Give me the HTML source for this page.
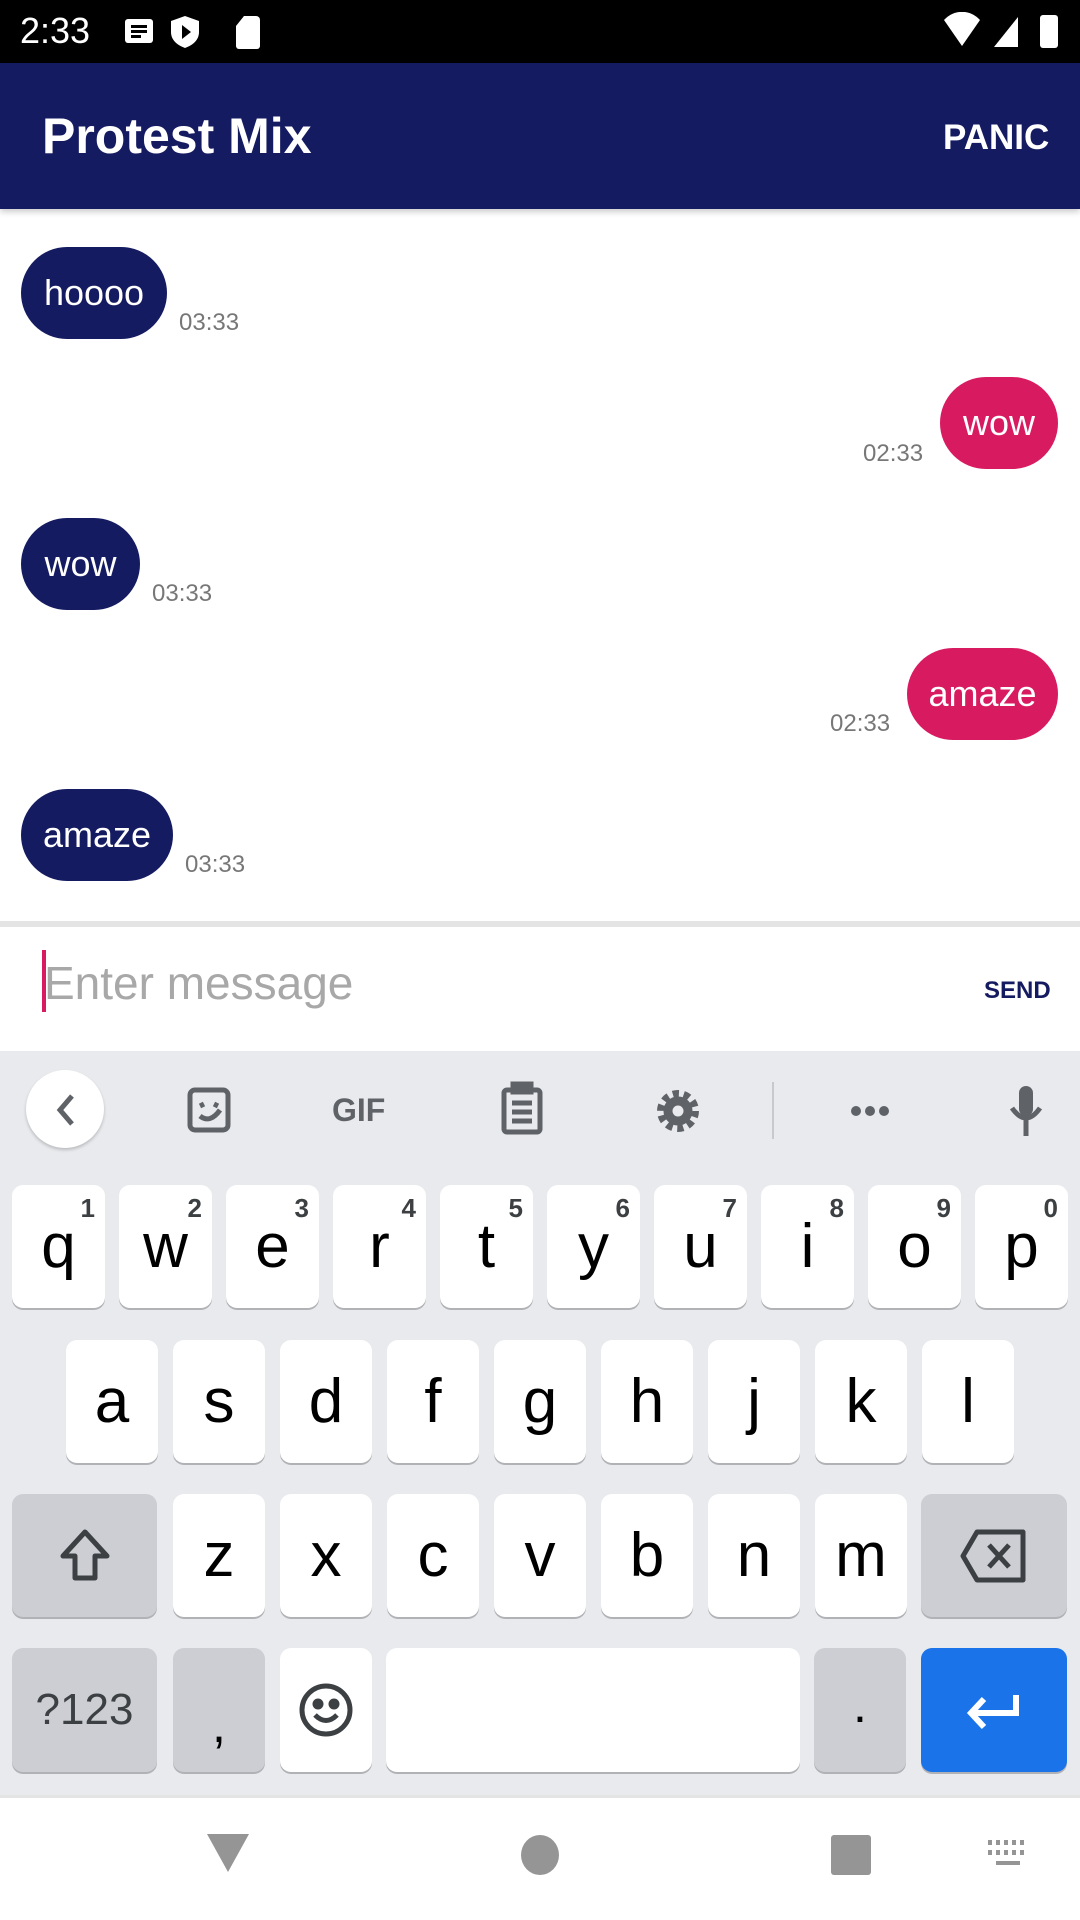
<!DOCTYPE html>
<html><head><meta charset="utf-8"><style>
*{margin:0;padding:0;box-sizing:border-box}
body{width:1080px;height:1920px;position:relative;background:#fff;font-family:"Liberation Sans",sans-serif;overflow:hidden}
.a{position:absolute}
.bl{position:absolute;background:#151b60;color:#fff;border-radius:46px;font-size:36px;display:flex;align-items:center;justify-content:center;height:92px}
.br{position:absolute;background:#d81b60;color:#fff;border-radius:46px;font-size:36px;display:flex;align-items:center;justify-content:center;height:92px}
.t{position:absolute;font-size:24px;color:#777}
.k{position:absolute;background:#fff;border-radius:11px;box-shadow:0 2px 0 #b0b2b6;display:flex;align-items:center;justify-content:center;font-size:62px;color:#000}
.g{background:#ccced4}
.n{position:absolute;top:8px;right:10px;font-size:26px;color:#3c4043;font-weight:bold}
</style></head><body>
<div class="a" style="left:0;top:0;width:1080px;height:63px;background:#000"></div>
<div class="a" style="left:20px;top:10px;color:#fff;font-size:36px">2:33</div>
<svg class="a" style="left:120px;top:14px" width="160" height="36"><rect x="5" y="5" width="28" height="24" rx="3" fill="#fff"/><rect x="11" y="11" width="16" height="3" fill="#000"/><rect x="11" y="16" width="16" height="3" fill="#000"/><rect x="11" y="21" width="10" height="3" fill="#000"/><path d="M65 2l14 5v11c0 8-6 13-14 16c-8-3-14-8-14-16V7z" fill="#fff"/><path d="M62 11l9 7l-9 7z" fill="#000"/><path d="M124 2h12a4 4 0 0 1 4 4v26a3 3 0 0 1-3 3h-18a3 3 0 0 1-3-3V12z" fill="#fff"/></svg>
<svg class="a" style="left:940px;top:12px" width="130" height="40"><path d="M4 8a24 24 0 0 1 36 0l-18 26z" fill="#fff"/><path d="M78 5v30h-24z" fill="#fff"/><rect x="100" y="3" width="18" height="33" rx="3" fill="#fff"/></svg>
<div class="a" style="left:0;top:63px;width:1080px;height:146px;background:#151b60;box-shadow:0 3px 6px rgba(0,0,0,.2)"></div>
<div class="a" style="left:42px;top:107px;color:#fff;font-size:50px;font-weight:bold">Protest Mix</div>
<div class="a" style="left:943px;top:118px;color:#fff;font-size:35px;font-weight:bold">PANIC</div>

<div class="bl" style="left:21px;top:247px;width:146px">hoooo</div><div class="t" style="left:179px;top:309px">03:33</div>
<div class="br" style="left:940px;top:377px;width:118px">wow</div><div class="t" style="left:863px;top:440px">02:33</div>
<div class="bl" style="left:21px;top:518px;width:119px">wow</div><div class="t" style="left:152px;top:580px">03:33</div>
<div class="br" style="left:907px;top:648px;width:151px">amaze</div><div class="t" style="left:830px;top:710px">02:33</div>
<div class="bl" style="left:21px;top:789px;width:152px">amaze</div><div class="t" style="left:185px;top:851px">03:33</div>

<div class="a" style="left:0;top:921px;width:1080px;height:6px;background:#e4e4e4"></div>
<div class="a" style="left:42px;top:950px;width:4px;height:62px;background:#d81b60"></div>
<div class="a" style="left:44px;top:956px;font-size:46px;color:#a8a8a8">Enter message</div>
<div class="a" style="left:984px;top:977px;font-size:24px;color:#151b60;font-weight:bold">SEND</div>

<div class="a" style="left:0;top:1051px;width:1080px;height:744px;background:#e8eaed"></div>
<div class="a" style="left:26px;top:1070px;width:78px;height:78px;border-radius:50%;background:#fff;box-shadow:0 2px 3px rgba(0,0,0,.2)"></div>
<svg class="a" style="left:0;top:1080px" width="1080" height="60" fill="none" stroke="#5f6368" stroke-width="5">
<path d="M72 16l-12 14l12 14"/>
<rect x="190" y="10" width="38" height="40" rx="5"/><path d="M200 26l4-2M214 24l4 2M200 36q10 8 20-6"/>
<text x="332" y="41" font-family="Liberation Sans" font-weight="bold" font-size="32" fill="#5f6368" stroke="none">GIF</text>
<rect x="504" y="10" width="36" height="42" rx="3"/><path d="M512 23h20M512 32h20M512 41h20"/><rect x="513" y="4" width="18" height="8" fill="#5f6368"/>
<circle cx="678" cy="31" r="10" stroke-width="9"/><circle cx="678" cy="31" r="17" stroke-dasharray="6 4.7" stroke-width="8"/>
<circle cx="856" cy="31" r="5" fill="#5f6368" stroke="none"/><circle cx="870" cy="31" r="5" fill="#5f6368" stroke="none"/><circle cx="884" cy="31" r="5" fill="#5f6368" stroke="none"/>
<rect x="1019" y="6" width="14" height="30" rx="7" fill="#5f6368" stroke="none"/><path d="M1012 28q14 20 28 0M1026 40v16"/>
</svg>
<div class="a" style="left:772px;top:1082px;width:2px;height:57px;background:#c8c9cc"></div>

<div class="k" style="left:12px;top:1185px;width:93px;height:123px">q<span class="n">1</span></div>
<div class="k" style="left:119px;top:1185px;width:93px;height:123px">w<span class="n">2</span></div>
<div class="k" style="left:226px;top:1185px;width:93px;height:123px">e<span class="n">3</span></div>
<div class="k" style="left:333px;top:1185px;width:93px;height:123px">r<span class="n">4</span></div>
<div class="k" style="left:440px;top:1185px;width:93px;height:123px">t<span class="n">5</span></div>
<div class="k" style="left:547px;top:1185px;width:93px;height:123px">y<span class="n">6</span></div>
<div class="k" style="left:654px;top:1185px;width:93px;height:123px">u<span class="n">7</span></div>
<div class="k" style="left:761px;top:1185px;width:93px;height:123px">i<span class="n">8</span></div>
<div class="k" style="left:868px;top:1185px;width:93px;height:123px">o<span class="n">9</span></div>
<div class="k" style="left:975px;top:1185px;width:93px;height:123px">p<span class="n">0</span></div>

<div class="k" style="left:66px;top:1340px;width:92px;height:123px">a</div>
<div class="k" style="left:173px;top:1340px;width:92px;height:123px">s</div>
<div class="k" style="left:280px;top:1340px;width:92px;height:123px">d</div>
<div class="k" style="left:387px;top:1340px;width:92px;height:123px">f</div>
<div class="k" style="left:494px;top:1340px;width:92px;height:123px">g</div>
<div class="k" style="left:601px;top:1340px;width:92px;height:123px">h</div>
<div class="k" style="left:708px;top:1340px;width:92px;height:123px">j</div>
<div class="k" style="left:815px;top:1340px;width:92px;height:123px">k</div>
<div class="k" style="left:922px;top:1340px;width:92px;height:123px">l</div>

<div class="k g" style="left:12px;top:1494px;width:145px;height:123px"><svg width="60" height="60" fill="none" stroke="#3c4043" stroke-width="5"><path d="M30 6l-22 24h12v22h20v-22h12z" stroke-linejoin="round"/></svg></div>
<div class="k" style="left:173px;top:1494px;width:92px;height:123px">z</div>
<div class="k" style="left:280px;top:1494px;width:92px;height:123px">x</div>
<div class="k" style="left:387px;top:1494px;width:92px;height:123px">c</div>
<div class="k" style="left:494px;top:1494px;width:92px;height:123px">v</div>
<div class="k" style="left:601px;top:1494px;width:92px;height:123px">b</div>
<div class="k" style="left:708px;top:1494px;width:92px;height:123px">n</div>
<div class="k" style="left:815px;top:1494px;width:92px;height:123px">m</div>
<div class="k g" style="left:921px;top:1494px;width:146px;height:123px"><svg width="70" height="56" fill="none" stroke="#3c4043" stroke-width="5"><path d="M18 4h46v48h-46l-14-24z" stroke-linejoin="round"/><path d="M30 17l20 22M50 17l-20 22"/></svg></div>

<div class="k g" style="left:12px;top:1648px;width:145px;height:124px;font-size:44px;color:#3c4043">?123</div>
<div class="k g" style="left:173px;top:1648px;width:92px;height:124px;font-size:50px;padding-top:30px">,</div>
<div class="k" style="left:280px;top:1648px;width:92px;height:124px"><svg width="60" height="60" fill="none" stroke="#3c4043" stroke-width="5"><circle cx="30" cy="30" r="24"/><circle cx="22" cy="24" r="3" fill="#3c4043"/><circle cx="38" cy="24" r="3" fill="#3c4043"/><path d="M19 35q11 11 22 0"/></svg></div>
<div class="k" style="left:386px;top:1648px;width:414px;height:124px"></div>
<div class="k g" style="left:814px;top:1648px;width:92px;height:124px;font-size:50px;padding-bottom:10px">.</div>
<div class="k" style="left:921px;top:1648px;width:146px;height:124px;background:#1a73e8"><svg width="60" height="50" fill="none" stroke="#fff" stroke-width="6"><path d="M52 10v18h-44M20 14l-13 14l13 14"/></svg></div>

<div class="a" style="left:0;top:1795px;width:1080px;height:125px;background:#fff;border-top:3px solid #e4e4e4"></div>
<svg class="a" style="left:0;top:1830px" width="1080" height="60"><path d="M207 4h42l-21 38z" fill="#959595"/><ellipse cx="540" cy="25" rx="19" ry="20" fill="#959595"/><rect x="831" y="5" width="40" height="40" rx="3" fill="#959595"/><g fill="#959595"><rect x="988" y="10" width="4" height="5"/><rect x="996" y="10" width="4" height="5"/><rect x="1004" y="10" width="4" height="5"/><rect x="1012" y="10" width="4" height="5"/><rect x="1020" y="10" width="4" height="5"/><rect x="988" y="20" width="4" height="5"/><rect x="996" y="20" width="4" height="5"/><rect x="1004" y="20" width="4" height="5"/><rect x="1012" y="20" width="4" height="5"/><rect x="1020" y="20" width="4" height="5"/><rect x="996" y="31" width="24" height="4"/></g></svg>
</body></html>
